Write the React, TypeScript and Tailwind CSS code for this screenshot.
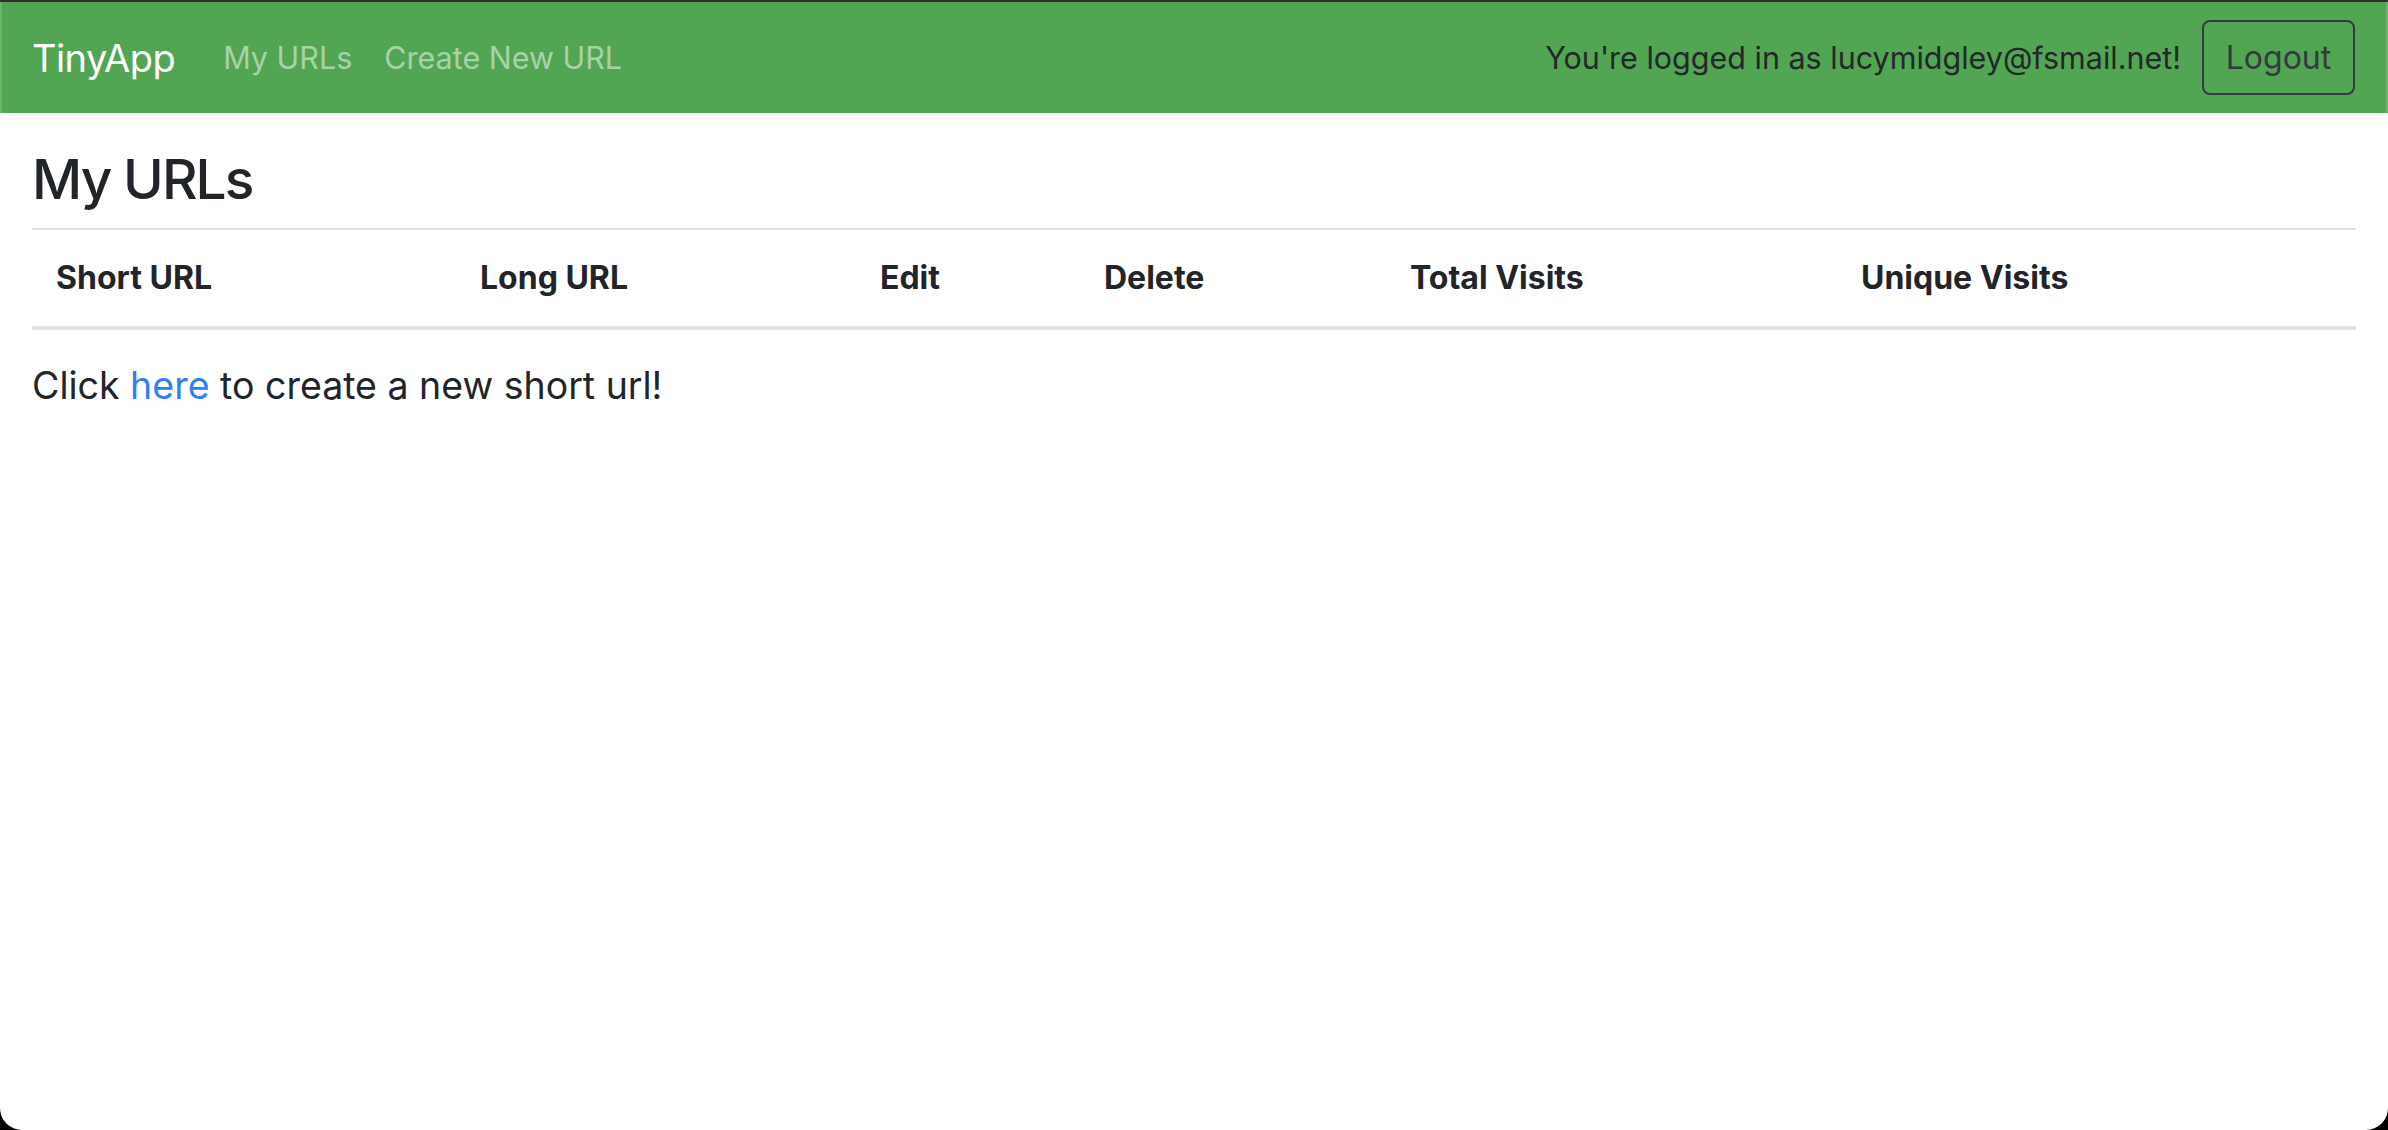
const font = { fontFamily: "Inter, 'Noto Sans', sans-serif" };

const columns = ["Short URL", "Long URL", "Edit", "Delete", "Total Visits", "Unique Visits"];

function Navbar() {
  return (
    <nav className="flex h-[111px] items-center border-x-2 border-[#6cb36c] bg-[#52a552] pl-[30px] pr-[31px]">
      <a href="#" className="mr-[32px] text-[38px] leading-[60px] tracking-[-0.015em] text-white">
        TinyApp
      </a>
      <div className="flex items-center">
        <a href="#" className="px-4 text-[30.5px] leading-[48px] text-white/50">
          My URLs
        </a>
        <a href="#" className="px-4 text-[30.5px] leading-[48px] text-white/50">
          Create New URL
        </a>
      </div>
      <div className="ml-auto flex items-center gap-[21px]">
        <span className="text-[30.5px] leading-[48px] text-[#23282b]">
          You're logged in as lucymidgley@fsmail.net!
        </span>
        <button
          type="button"
          className="flex h-[75px] w-[153px] items-center justify-center rounded-[8px] border-2 border-[#343a40] text-[32px] text-[#343a40]"
        >
          Logout
        </button>
      </div>
    </nav>
  );
}

export default function App() {
  return (
    <div className="h-[1130px] w-full overflow-hidden bg-black" style={font}>
      <div className="flex h-full flex-col rounded-b-[22px] border-t-2 border-[#2e2e2e] bg-white">
        <Navbar />
        <main className="px-[32px] pt-[33px]">
          <h3 className="text-[55px] font-medium leading-[67px] tracking-[-0.035em] text-[#212529]">My URLs</h3>
          <div className="mt-[15px] border-t-2 border-[#dee2e6]">
            <div className="grid grid-cols-[424px_400px_224px_306px_451px_1fr] border-b-4 border-[#dee2e6]">
              {columns.map((c) => (
                <div key={c} className="px-6 py-6 text-[32px] font-bold leading-[48px] text-[#212529]">
                  {c}
                </div>
              ))}
            </div>
          </div>
          <p className="mt-[26px] text-[37.5px] leading-[60px] text-[#212529]">
            Click{" "}
            <a href="#" className="text-[#2f80f7]">
              here
            </a>{" "}
            to create a new short url!
          </p>
        </main>
      </div>
    </div>
  );
}
